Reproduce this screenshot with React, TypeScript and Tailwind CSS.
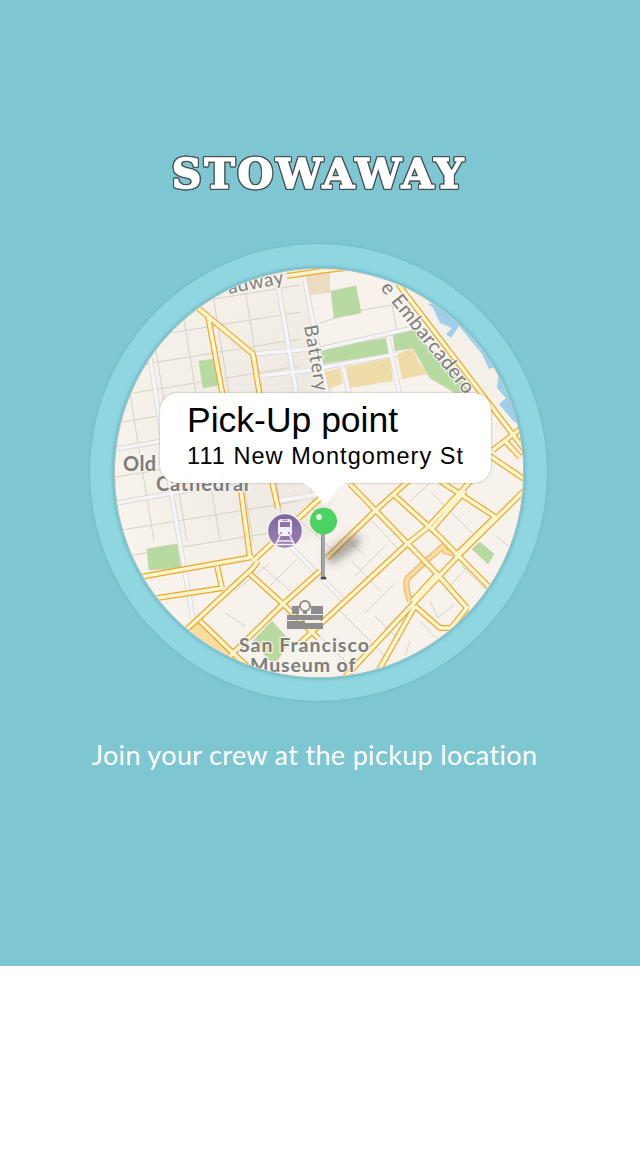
const YELLOW_ROADS = [
  "198,307 253,353 260,396",
  "208,315 223,396",
  "287,275 320,270 345,267",
  "398,283 520,443 535,462",
  "493,449 523,426",
  "240,482 250,557",
  "272,480 278,507",
  "140,576 253,556",
  "253,560 317,500 340,480",
  "157,597 223,587",
  "217,565 222,587",
  "186,629 253,567 258,560",
  "200,620 233,652 250,668",
  "250,573 283,603 318,637",
  "225,660 283,603 320,570",
  "327,557 375,510 425,465",
  "300,642 407,543 427,527 480,470",
  "345,676 413,603 460,553 530,484",
  "350,483 437,573 467,607",
  "393,493 437,533 490,587",
  "440,480 497,517",
  "495,516 455,555",
  "415,605 440,627 451,627 467,607",
  "375,676 415,605",
  "437,573 412,600",
  "432,528 465,490",
  "490,455 524,478",
  "505,440 520,456",
];

const WHITE_ROADS = [
  "150,357 172,497 193,617",
  "117,448 162,440",
  "117,502 240,480",
  "278,283 297,396",
  "303,270 320,357 328,396",
  "388,337 400,396",
  "343,365 350,396",
  "320,367 397,353",
  "320,348 413,327",
  "253,353 320,347",
  "258,375 320,368",
  "277,500 320,493",
  "292,547 346,602",
];

const PARKS = [
  "199,360 215,358 219,384 203,387",
  "331,290 356,285 361,312 334,317",
  "320,348 387,337 388,353 320,363",
  "393,333 413,327 433,353 463,380 470,393 457,393 430,377 413,347 395,350",
  "253,640 272,620 290,640 277,660 270,660",
  "472,548 480,541 494,553 488,563",
  "147,548 177,543 181,567 149,569",
];

const TAN_BLOCKS = [
  "397,353 413,347 418,360 428,373 402,378",
  "346,366 390,357 393,380 350,387",
  "320,372 340,367 343,383 320,390",
];

// block lines on the left of the map
const gridLines: [number, number, number, number][] = [];
for (let y = 290; y < 600; y += 27) {
  gridLines.push([115, y + 24, 300, y - 6]);
}
for (let x = 110; x < 320; x += 33) {
  gridLines.push([x, 270, x + 44, 540]);
}

// the diagonal blocks in the lower half
const diagonalLines: [number, number, number, number][] = [
  [332, 548, 300, 520], [345, 535, 365, 555], [352, 560, 380, 590], [372, 520, 400, 550],
  [355, 575, 385, 545], [365, 612, 395, 582], [385, 628, 420, 592], [400, 640, 375, 615],
  [430, 490, 475, 535], [410, 500, 455, 460], [445, 590, 470, 563], [497, 535, 515, 552],
  [462, 565, 500, 602], [420, 620, 444, 645], [405, 655, 410, 640], [340, 610, 390, 660],
  [315, 630, 350, 665], [290, 590, 262, 565], [245, 625, 225, 612], [270, 562, 235, 590],
  [295, 560, 270, 585],
];

function Pin() {
  return (
    <g>
      <path d="M332 556 L354 540" stroke="#4a4640" strokeOpacity="0.5" strokeWidth="12" strokeLinecap="round" filter="url(#blur)" />
      <rect x="321.5" y="530" width="3.5" height="47" fill="#a3a5a8" />
      <rect x="321" y="530" width="1" height="47" fill="#8b8d90" />
      <ellipse cx="323.5" cy="577" rx="3" ry="1.5" fill="#4d4d4d" />
      <circle cx="323.5" cy="520" r="13.5" fill="#4bd263" />
      <circle cx="319" cy="516" r="3" fill="#e4f8e6" />
    </g>
  );
}

function TrainBadge() {
  return (
    <g>
      <circle cx="285" cy="530" r="17.5" fill="url(#train)" stroke="#f4f1ee" strokeWidth="1.5" />
      <rect x="278" y="518" width="14" height="17" rx="3.5" fill="#f2eff5" />
      <rect x="280" y="521" width="10" height="5" fill="#8f75ad" />
      <rect x="282" y="518.7" width="6" height="1" fill="#8f75ad" />
      <circle cx="281" cy="532" r="1" fill="#8f75ad" />
      <circle cx="289" cy="532" r="1" fill="#8f75ad" />
      <path d="M280 535 L275 545 M290 535 L295 545 M277.5 540 H292.5 M276 543.5 H294" stroke="#f2eff5" strokeWidth="1.6" fill="none" />
    </g>
  );
}

function MuseumIcon() {
  return (
    <g fill="#8d8d8d">
      <rect x="292" y="605" width="7" height="8" />
      <rect x="311" y="605" width="12" height="8" />
      <circle cx="305" cy="605" r="5" fill="none" stroke="#8d8d8d" strokeWidth="2" />
      <rect x="303" y="609" width="4" height="4" />
      <rect x="287" y="614" width="36" height="5" />
      <rect x="287" y="620" width="36" height="8" />
      <rect x="305" y="620" width="18" height="2" fill="#f4efe8" />
    </g>
  );
}

function MapLabels() {
  return (
    <g fill="#7d7d7d" stroke="#f7f4ee" strokeWidth="2.5" paintOrder="stroke" className="font-['Lato',sans-serif] font-bold">
      <text x="229" y="293" fontSize="19" transform="rotate(-11 229 293)" fontWeight="400" letterSpacing="0.6">adway</text>
      <text x="304" y="325" fontSize="19" transform="rotate(80 304 325)" fontWeight="400" letterSpacing="0.8">Battery</text>
      <text fontSize="20" fontWeight="400" letterSpacing="0.5">
        <textPath href="#embarcadero">e Embarcadero</textPath>
      </text>
      <text x="123" y="470" fontSize="20" letterSpacing="0.4">Old</text>
      <text x="156" y="490" fontSize="20" letterSpacing="0.8">Cathedral</text>
      <text x="239" y="651" fontSize="19.5" letterSpacing="1">San Francisco</text>
      <text x="250" y="671" fontSize="19.5" letterSpacing="0.9">Museum of</text>
    </g>
  );
}

function MapDrawing() {
  return (
    <svg viewBox="115 268 408 408" className="block h-full w-full">
      <defs>
        <radialGradient id="land" cx="50%" cy="40%" r="55%">
          <stop offset="0%" stopColor="#ebe7e0" />
          <stop offset="100%" stopColor="#f8f4ec" />
        </radialGradient>
        <linearGradient id="train" x1="0" y1="0" x2="0" y2="1">
          <stop offset="0%" stopColor="#7f659f" />
          <stop offset="100%" stopColor="#9a82b5" />
        </linearGradient>
        <filter id="blur" filterUnits="userSpaceOnUse" x="290" y="500" width="110" height="100">
          <feGaussianBlur stdDeviation="5" />
        </filter>
        <path id="embarcadero" d="M380 287 L470 400" />
      </defs>

      <rect x="115" y="268" width="408" height="408" fill="url(#land)" />

      {/* water with the piers */}
      <polygon
        points="428,303 433,307 440,322 452,327 446,333 451,337 459,325 482,353 489,368 499,365 497,387 506,397 499,403 519,427 535,427 535,290"
        fill="#9dcfe9"
      />

      {gridLines.map(([x1, y1, x2, y2], i) => (
        <line key={i} x1={x1} y1={y1} x2={x2} y2={y2} stroke="#d6d1c7" strokeWidth="1" />
      ))}
      {/* the east and south have bigger blocks, cover the grid there */}
      <polygon points="300,268 400,268 470,395 530,430 530,676 115,676 115,576 253,556 330,530 335,400" fill="#f7f3ec" />
      {diagonalLines.map(([x1, y1, x2, y2], i) => (
        <line key={i} x1={x1} y1={y1} x2={x2} y2={y2} stroke="#d6d1c7" strokeWidth="1" />
      ))}
      <polyline points="357,310 392,304 397,330" fill="none" stroke="#d6d1c7" strokeWidth="1" />
      <polyline points="320,322 357,310" fill="none" stroke="#d6d1c7" strokeWidth="1" />
      <polyline points="430,600 438,617 455,603" fill="none" stroke="#d6d1c7" strokeWidth="1" />

      {PARKS.map((points) => (
        <polygon key={points} points={points} fill="#b6da9f" stroke="#c6c6ae" strokeWidth="0.5" />
      ))}
      {TAN_BLOCKS.map((points) => (
        <polygon key={points} points={points} fill="#efdca8" />
      ))}
      <polygon points="305,273 330,272 330,292 305,295" fill="#eadcc0" />
      <polygon points="190,627 200,620 228,650 220,662 200,655" fill="#f6dda0" />

      {WHITE_ROADS.map((points) => (
        <polyline key={points} points={points} fill="none" stroke="#d4d0cb" strokeWidth="5" />
      ))}
      {WHITE_ROADS.map((points) => (
        <polyline key={points} points={points} fill="none" stroke="#f5f4f6" strokeWidth="3.8" />
      ))}

      {/* highway ramp */}
      <path d="M410 600 C405 585 405 578 410 575 L428 558 C435 553 438 550 443 545 L445 550 L455 553" fill="none" stroke="#e9b25c" strokeWidth="6" />
      <path d="M410 600 C405 585 405 578 410 575 L428 558 C435 553 438 550 443 545 L445 550 L455 553" fill="none" stroke="#f8dc9e" strokeWidth="4" />

      {YELLOW_ROADS.map((points) => (
        <polyline key={points} points={points} fill="none" stroke="#efa72c" strokeWidth="6" strokeLinejoin="round" />
      ))}
      {YELLOW_ROADS.map((points) => (
        <polyline key={points} points={points} fill="none" stroke="#fbf5cd" strokeWidth="3.6" strokeLinejoin="round" />
      ))}

      <MapLabels />
      <MuseumIcon />
      <TrainBadge />
      <Pin />
    </svg>
  );
}

function Callout() {
  return (
    <div className="absolute left-[70px] top-[149px] h-[90px] w-[331px] rounded-[18px] bg-white/[0.98] pl-[27px] pt-[7px] shadow-[0_0_2px_rgba(90,85,75,0.6)]">
      <p className="font-['Liberation_Sans',sans-serif] text-[35.5px] leading-[40px] text-black">Pick-Up point</p>
      <p className="mt-[1px] font-['Liberation_Sans',sans-serif] text-[23.5px] leading-[30px] tracking-[1.05px] text-black">
        111 New Montgomery St
      </p>
      <svg viewBox="0 0 50 28" className="absolute left-[140px] top-[89px] h-[28px] w-[50px]">
        <path d="M0 0 H50 C43 2 40 5 36 9 L27 22 Q25 24 23 22 L14 9 C10 5 7 2 0 0 Z" fill="#ffffff" />
      </svg>
    </div>
  );
}

export default function App() {
  return (
    <div className="min-h-[1168px] w-[640px] bg-white">
      <div className="flex h-[966px] flex-col items-center bg-[#7ec6d1] pt-[147px]">
        <h1 className="ml-[-2px] font-['DejaVu_Serif',serif] text-[41px] font-bold leading-[55px] tracking-[2.9px] text-white [-webkit-text-stroke:1.5px_#ffffff] [filter:drop-shadow(1px_0_0_#465052)_drop-shadow(-1px_0_0_#465052)_drop-shadow(0_1px_0_#465052)_drop-shadow(0_-1px_0_#465052)]">
          STOWAWAY
        </h1>
        <div className="relative ml-[-3px] mt-[42px] flex h-[457px] w-[457px] items-center justify-center rounded-full bg-[#90d6e1] shadow-[0_0_2px_rgba(70,140,155,0.5)]">
          <div className="h-[410px] w-[410px] overflow-hidden rounded-full border border-[#c2bdb2] shadow-[0_0_3px_2px_rgba(90,175,190,0.6)]">
            <MapDrawing />
          </div>
          <Callout />
        </div>
        <p className="ml-[-11px] mt-[36px] font-['Lato',sans-serif] text-[27px] leading-[36px] tracking-[0.33px] text-white">
          Join your crew at the pickup location
        </p>
      </div>
    </div>
  );
}
